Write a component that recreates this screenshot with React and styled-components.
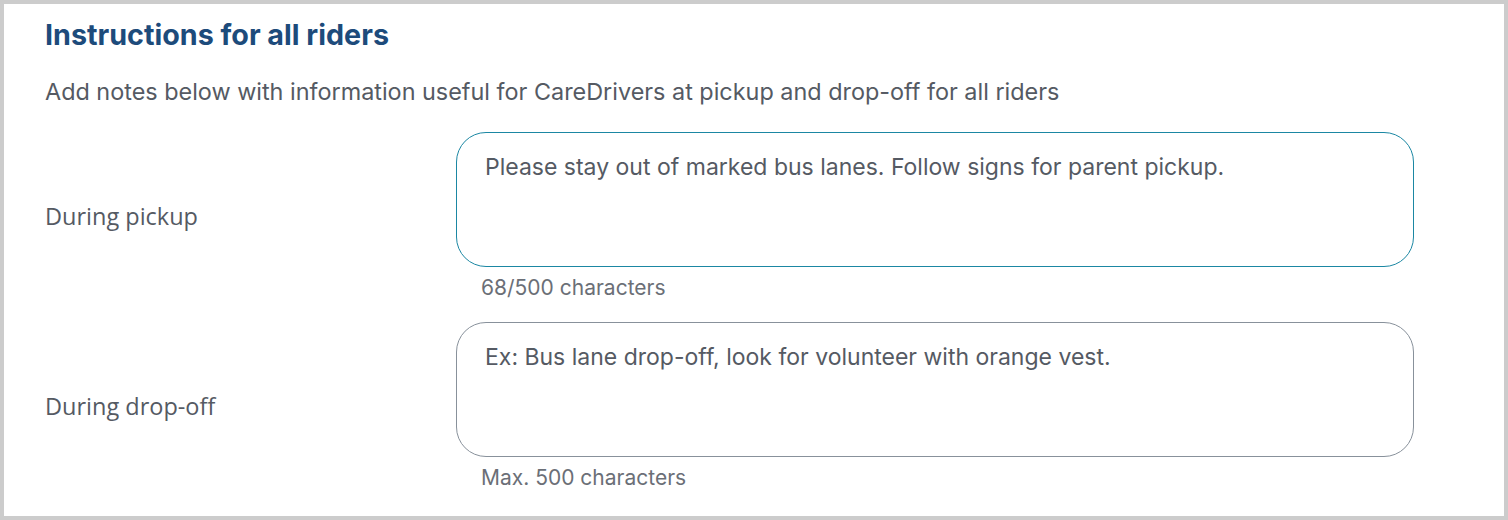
import React from "react";
import styled, { createGlobalStyle } from "styled-components";

const Global = createGlobalStyle`
  html, body { margin: 0; padding: 0; background: #ffffff; }
  body { font-family: Inter, "Noto Sans", sans-serif; }
  * { box-sizing: border-box; }
`;

const Card = styled.section`
  width: 1508px;
  height: 520px;
  border: 4px solid #cccccc;
  background: #ffffff;
  padding: 14px 0 0 41px;
`;

const Title = styled.h2`
  margin: 0;
  font-family: Inter, "Noto Sans", sans-serif;
  font-weight: 700;
  font-size: 28.7px;
  line-height: 34px;
  color: #1d4b7b;
`;

const Subtitle = styled.p`
  margin: 26px 0 0;
  font-size: 23.4px;
  line-height: 28px;
  color: #555a63;
`;

const Rows = styled.div`
  margin-top: 26px;
  display: flex;
  flex-direction: column;
  gap: 22px;
`;

const Row = styled.div`
  display: flex;
  align-items: center;
`;

const Label = styled.label`
  width: 411px;
  flex: none;
  font-family: "Open Sans", "Noto Sans", sans-serif;
  font-size: 23.5px;
  line-height: 28px;
  color: #555a63;
`;

const Field = styled.div`
  display: flex;
  flex-direction: column;
`;

const TextBox = styled.div`
  width: 958px;
  height: 135px;
  border: 1px solid ${(p) => (p.$focused ? "#1b87a3" : "#88919b")};
  border-radius: 30px;
  padding: 20px 28px;
  font-size: 23px;
  line-height: 28px;
  color: #555a63;
`;

const Helper = styled.div`
  margin-top: 8px;
  padding-left: 25px;
  font-size: 21px;
  line-height: 25px;
  color: #6b6f77;
`;

export default function App() {
  return (
    <>
      <Global />
      <Card>
        <Title>Instructions for all riders</Title>
        <Subtitle>
          Add notes below with information useful for CareDrivers at pickup and drop-off for all riders
        </Subtitle>
        <Rows>
          <Row>
            <Label>During pickup</Label>
            <Field>
              <TextBox $focused>
                Please stay out of marked bus lanes. Follow signs for parent pickup.
              </TextBox>
              <Helper>68/500 characters</Helper>
            </Field>
          </Row>
          <Row>
            <Label>During drop-off</Label>
            <Field>
              <TextBox>Ex: Bus lane drop-off, look for volunteer with orange vest.</TextBox>
              <Helper>Max. 500 characters</Helper>
            </Field>
          </Row>
        </Rows>
      </Card>
    </>
  );
}
